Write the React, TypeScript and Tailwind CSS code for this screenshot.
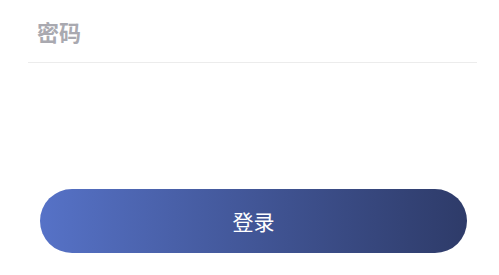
import React from 'react';

const App: React.FC = () => {
  return (
    <div
      className="w-[499px] h-[275px] bg-white overflow-hidden"
      style={{ fontFamily: '"Noto Sans CJK SC", "Noto Sans", sans-serif' }}
    >
      <div className="ml-[28px] mr-[22px] h-[63px] flex items-center border-b border-[#ececec] pl-[9px]">
        <input
          type="password"
          placeholder="密码"
          className="w-full bg-transparent outline-none text-[22px] font-bold text-[#333] placeholder-[#a9a9b0] leading-none"
        />
      </div>
      <div className="mt-[126px] ml-[40px] mr-[32px]">
        <button className="w-full h-[64px] rounded-full bg-gradient-to-r from-[#5672c7] to-[#2e3b69] text-white text-[21px] leading-none flex items-center justify-center">
          登录
        </button>
      </div>
    </div>
  );
};

export default App;
